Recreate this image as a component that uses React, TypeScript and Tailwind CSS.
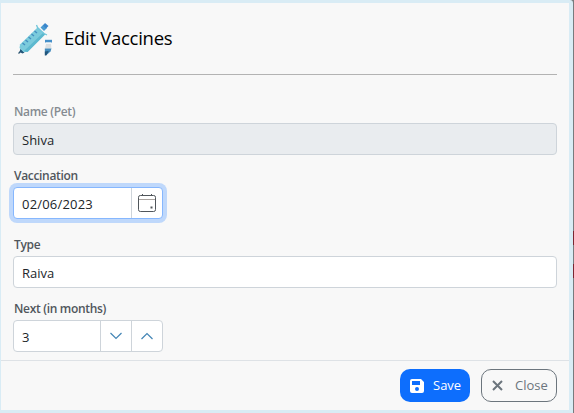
import type { ReactNode } from "react";

function Field({ label, muted = false, className = "", children }: { label: string; muted?: boolean; className?: string; children: ReactNode }) {
  return (
    <div className={className}>
      <label className={`block h-[21px] pl-px text-[12px] leading-[20px] font-semibold tracking-[-0.32px] ${muted ? "text-[#858b91]" : "text-[#50565c]"}`}>{label}</label>
      {children}
    </div>
  );
}

function SyringeIcon() {
  return (
    <svg className="ml-[5px] h-[34px] w-9 shrink-0" viewBox="18 21 36 34">
      <path d="M18.500 52.500l3-3" stroke="#2d5570" strokeWidth="1.200" />
      <path d="M20.500 47.500l4 4-2 1-3-1.500z" fill="#235579" />
      <path d="M20 43.500L37.500 26.500l7.500 7-17.500 17.500h-4l-4-4z" fill="#7bcbdc" />
      <path d="M24 50L43.500 31.500l1.500 2-17.500 17.500z" fill="#5db9cf" />
      <path d="M36.500 24l1 2.500 6.500 6 3 1.500" fill="none" stroke="#72c5da" strokeWidth="1.300" />
      <path d="M40.500 26.500l3-3 3.500 3.500-3 3z" fill="#4a9bd2" />
      <path d="M43 24.500l2-2.500 3.500 3-2.500 2.500z" fill="#3b86cb" />
      <path d="M22.500 42l2.500 2m.5-5l2.500 2m.5-5l2.500 2m.5-5l2.500 2m.5-5l2.500 2" stroke="#438fc0" strokeWidth="1.400" />
      <path d="M45 38.800h7v2.700h-7z" fill="#458fc9" />
      <path d="M46 41.500h5v1.500h-5z" fill="#f2f6f8" />
      <path d="M46 43h5l.5 4.500h-6.500z" fill="#dadfe2" />
      <path d="M44.800 47.500h6.700l-1 3-4 3.500h-1.500z" fill="#438bbd" />
      <path d="M44.800 50.500l4-.5-2.500 4.500h-1.500z" fill="#235579" />
    </svg>
  );
}

export default function App() {
  return (
    <div className="h-[413px] w-[574px] bg-[#777b7e] bg-[linear-gradient(#777b7e_231px,#7b2631_231px,#7b2631_245px,#777b7e_245px,#777b7e_264px,#7b2631_264px,#7b2631_278px,#777b7e_278px,#777b7e_310px,#555b66_310px,#555b66_320px,#777b7e_320px)] pr-px font-['Open_Sans','Noto_Sans',sans-serif]">
      <div className="flex h-full flex-col rounded-tr-[3px] border-t-[3px] border-r-4 border-b-[3px] border-l border-[#d9ecf5] bg-[#f8f8f8]">
        <header className="ml-3 flex h-[72px] w-[544px] items-center border-b border-[#b3b3b3]">
          <SyringeIcon />
          <h1 className="ml-[10px] pb-0.5 text-[18.5px] leading-6 tracking-[-0.28px] text-black">Edit Vaccines</h1>
        </header>
        <main className="h-[285px] w-[556px] shrink-0 pt-[27px] pl-3 text-[13px] text-[#212529]">
          <Field label="Name (Pet)" muted>
            <div className="flex h-8 items-center rounded-[4px] border border-[#ced4da] bg-[#e9ecef] px-2 pt-1">Shiva</div>
          </Field>
          <Field label="Vaccination" className="mt-[11px]">
            <div className="flex h-8 w-[150px] items-center rounded-[4px] border border-[#86b7fe] bg-white shadow-[0_0_0_4px_#bfd8fb]">
              <span className="flex-1 pt-1 pl-2 tracking-[0.2px]">02/06/2023</span>
              <span className="flex h-full w-[31px] items-center justify-center border-l border-[#ced4da]">
                <svg className="size-[18px]" viewBox="0 0 18 18" fill="none" stroke="#50565b">
                  <rect x=".5" y="1.500" width="17" height="16" rx="1.800" />
                  <path d="M1 5.500h16" stroke="#aaa4a0" />
                  <path d="M4.500 0v1.500m9-1.500v1.500" />
                  <path d="M12.500 12.500h2v2h-2z" fill="#50565b" stroke="none" />
                </svg>
              </span>
            </div>
          </Field>
          <Field label="Type" className="mt-4">
            <div className="flex h-8 items-center rounded-[4px] border border-[#ced4da] bg-white px-2 pt-1">Raiva</div>
          </Field>
          <Field label="Next (in months)" className="mt-[11px]">
            <div className="flex h-8 w-[150px] items-center rounded-[4px] border border-[#ced4da] bg-white">
              <span className="flex-1 pt-1 pl-2">3</span>
              <span className="flex h-full w-[31px] items-center justify-center border-l border-[#ced4da]">
                <svg className="h-2 w-3" viewBox="0 0 12 8" fill="none" stroke="#4385b5" strokeWidth="1.200"><path d="M.5 1L6 6.500 11.500 1" /></svg>
              </span>
              <span className="flex h-full w-[31px] items-center justify-center border-l border-[#ced4da]">
                <svg className="h-2 w-3" viewBox="0 0 12 8" fill="none" stroke="#4385b5" strokeWidth="1.200"><path d="M.5 7L6 1.500 11.500 7" /></svg>
              </span>
            </div>
          </Field>
        </main>
        <footer className="flex flex-1 items-start justify-end gap-[11px] border-t border-[#dee2e6] pt-2 pr-3">
          <button className="flex h-[33px] w-[70px] items-center rounded-[10px] bg-[#0d6efd] pl-[10px] text-[13px] text-white">
            <svg className="mr-[9px] size-[14px] shrink-0" viewBox="0 0 14 14">
              <path fill="white" fillRule="evenodd" d="M2 0h9l3 3v9a2 2 0 0 1-2 2H2a2 2 0 0 1-2-2V2a2 2 0 0 1 2-2zm0 2v4h8V2zm5 6a2 2 0 1 0 0 4 2 2 0 0 0 0-4z" />
            </svg>
            Save
          </button>
          <button className="flex h-[33px] w-[76px] items-center rounded-[10px] border border-[#6c757d] pl-[10px] text-[13px] text-[#6c757d]">
            <svg className="mr-3 size-[11px] shrink-0" viewBox="0 0 11 11" stroke="#6c757d" strokeWidth="2"><path d="M1 1l9 9m0-9l-9 9" /></svg>
            Close
          </button>
        </footer>
      </div>
    </div>
  );
}
